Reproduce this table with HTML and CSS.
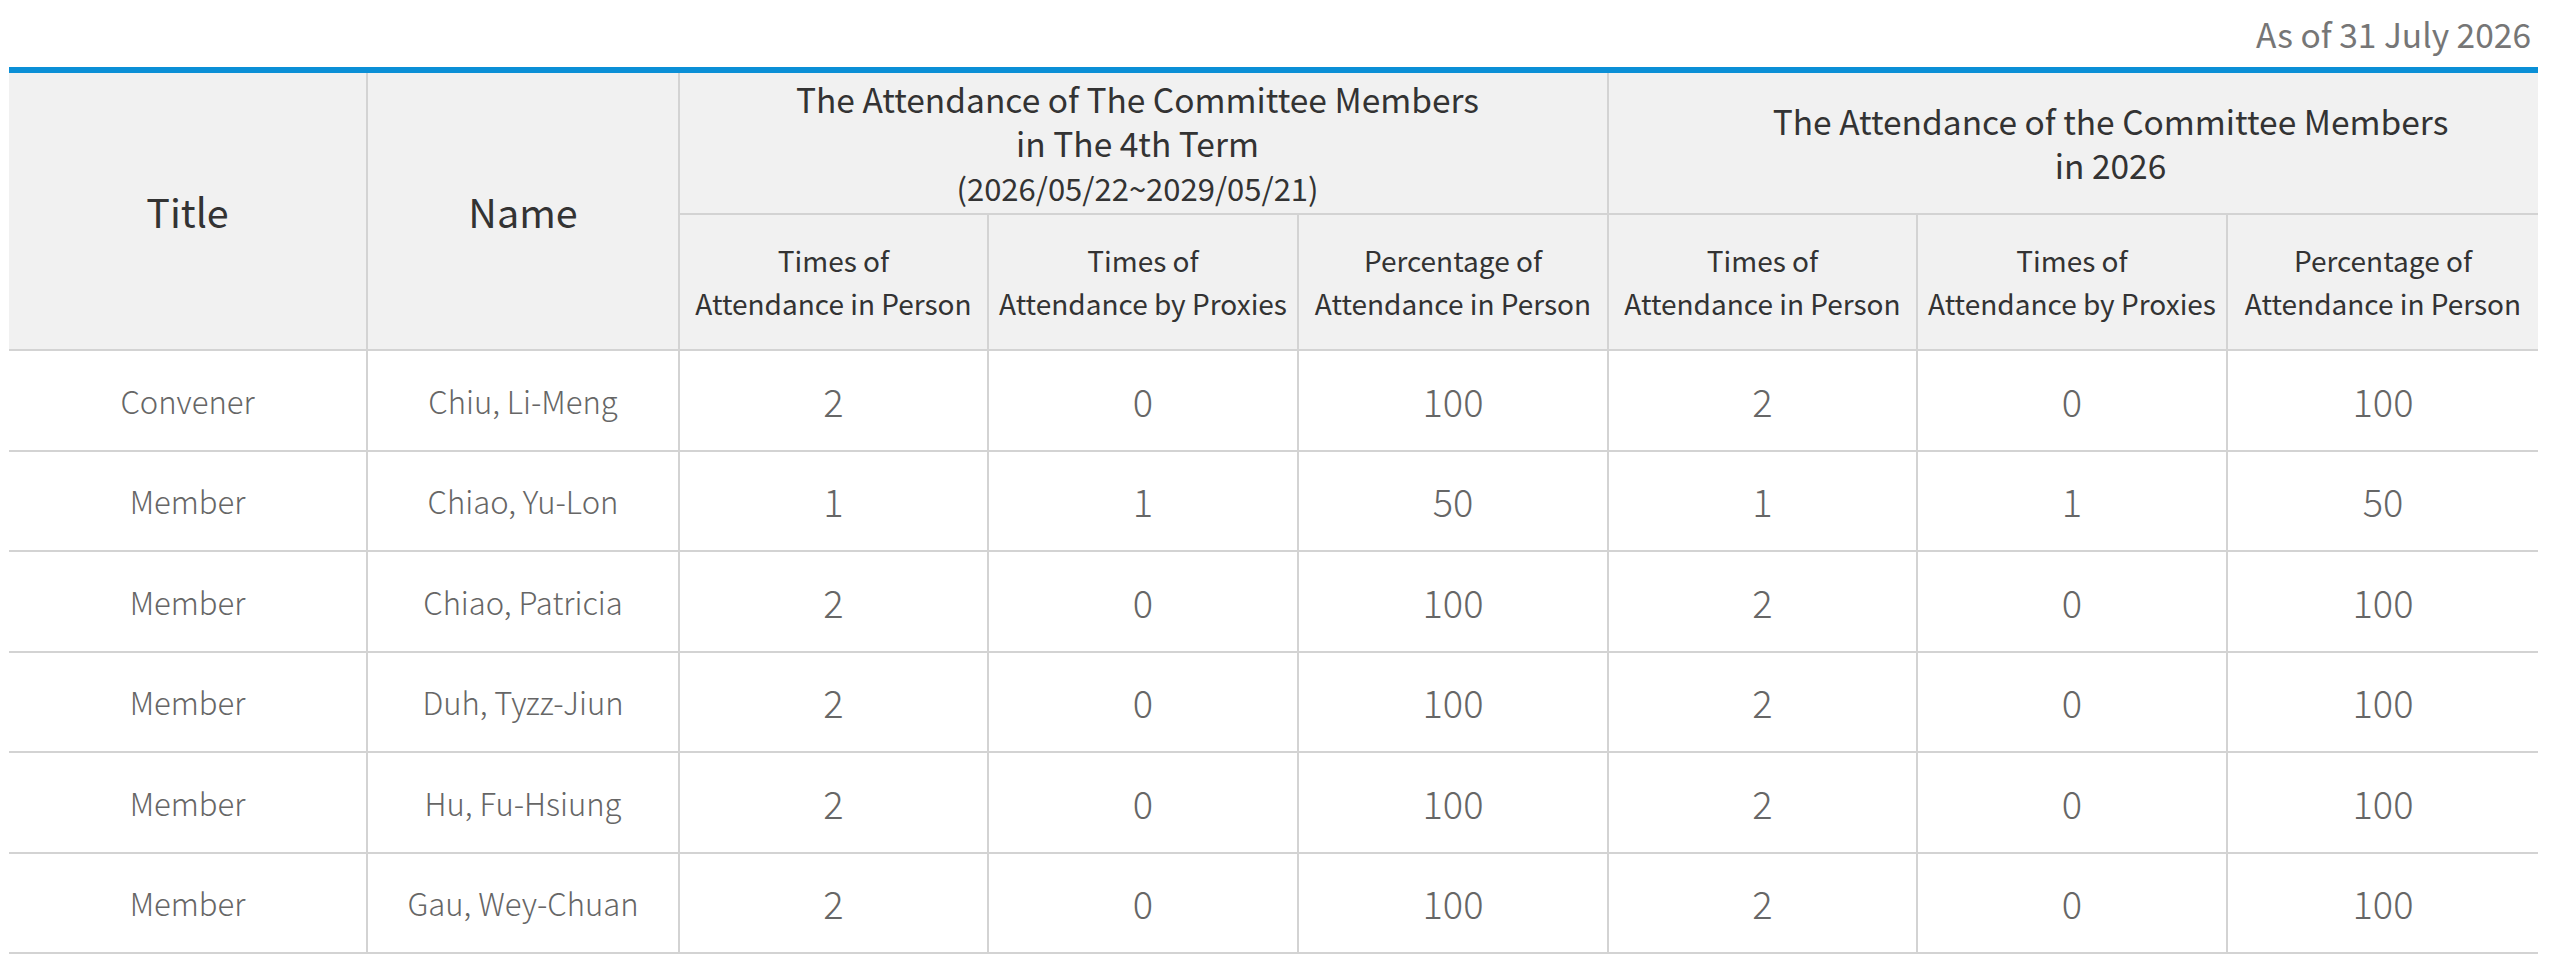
FILE: index.html
```html
<!DOCTYPE html>
<html lang="en">
<head>
<meta charset="utf-8">
<title>Attendance of the Committee Members</title>
<link rel="stylesheet" href="styles.css">
</head>
<body>
<div class="page">
  <p class="asof">As of 31 July 2026</p>
  <div class="table-wrap">
    <table class="att">
      <colgroup>
        <col class="c-title">
        <col class="c-name">
        <col class="c-a"><col class="c-b"><col class="c-c">
        <col class="c-d"><col class="c-e"><col class="c-f">
      </colgroup>
      <thead>
        <tr class="hrow1">
          <th rowspan="2" class="big">Title</th>
          <th rowspan="2" class="big">Name</th>
          <th colspan="3" class="group group-term">The Attendance of The Committee Members<br>in The 4th Term<br><span class="term">(2026/05/22~2029/05/21)</span></th>
          <th colspan="3" class="group group-year">The Attendance of the Committee Members<br>in 2026</th>
        </tr>
        <tr class="hrow2">
          <th class="sub">Times of<br>Attendance in Person</th>
          <th class="sub">Times of<br>Attendance by Proxies</th>
          <th class="sub">Percentage of<br>Attendance in Person</th>
          <th class="sub">Times of<br>Attendance in Person</th>
          <th class="sub">Times of<br>Attendance by Proxies</th>
          <th class="sub last">Percentage of<br>Attendance in Person</th>
        </tr>
      </thead>
      <tbody>
        <tr><td class="txt">Convener</td><td class="txt">Chiu, Li-Meng</td><td class="num">2</td><td class="num">0</td><td class="num">100</td><td class="num">2</td><td class="num">0</td><td class="num">100</td></tr>
        <tr><td class="txt">Member</td><td class="txt">Chiao, Yu-Lon</td><td class="num">1</td><td class="num">1</td><td class="num">50</td><td class="num">1</td><td class="num">1</td><td class="num">50</td></tr>
        <tr><td class="txt">Member</td><td class="txt">Chiao, Patricia</td><td class="num">2</td><td class="num">0</td><td class="num">100</td><td class="num">2</td><td class="num">0</td><td class="num">100</td></tr>
        <tr><td class="txt">Member</td><td class="txt">Duh, Tyzz-Jiun</td><td class="num">2</td><td class="num">0</td><td class="num">100</td><td class="num">2</td><td class="num">0</td><td class="num">100</td></tr>
        <tr><td class="txt">Member</td><td class="txt">Hu, Fu-Hsiung</td><td class="num">2</td><td class="num">0</td><td class="num">100</td><td class="num">2</td><td class="num">0</td><td class="num">100</td></tr>
        <tr><td class="txt">Member</td><td class="txt">Gau, Wey-Chuan</td><td class="num">2</td><td class="num">0</td><td class="num">100</td><td class="num">2</td><td class="num">0</td><td class="num">100</td></tr>
      </tbody>
    </table>
  </div>
</div>
</body>
</html>
```
FILE: styles.css
```css
html, body {
  margin: 0;
  padding: 0;
  background: #ffffff;
}

body {
  font-family: "Noto Sans CJK TC", "Noto Sans", "Liberation Sans", sans-serif;
}

.page {
  padding: 0 22px 0 9px;
}

.asof {
  margin: 0;
  padding: 10px 7px 9px 0;
  text-align: right;
  font-size: 33.5px;
  line-height: 48px;
  color: #767676;
}

.table-wrap {
  border-top: 6px solid #0a8fd6;
}

.att {
  width: 100%;
  border-collapse: collapse;
  table-layout: fixed;
}

.c-title { width: 358px; }
.c-name  { width: 312px; }
.c-a { width: 309px; }
.c-b { width: 310px; }
.c-c { width: 310px; }
.c-d { width: 309px; }
.c-e { width: 310px; }
.c-f { width: 311px; }

.att th,
.att td {
  padding: 0;
  text-align: center;
  vertical-align: middle;
  border: 2px solid #d3d3d3;
}

.att tr > :first-child { border-left: none; }
.att tr > :last-child { border-right: none; }
.att .hrow1 th { border-top: none; }
.att .hrow2 .last { border-right: none; }

.att th {
  background: #f1f1f1;
  color: #333333;
  font-weight: 400;
}

.hrow1 { height: 141px; }
.hrow2 { height: 136px; }

.att th.big {
  font-size: 39.5px;
  line-height: 50px;
}

.att th.group {
  font-size: 33.5px;
  line-height: 44px;
}

.att th.group-term {
  padding-right: 12px;
}

.att th.group-year {
  padding-left: 74px;
}

.att th.group .term {
  font-size: 31px;
}

.att th.sub {
  font-size: 28px;
  line-height: 43px;
}

.att tbody tr {
  height: 100.5px;
}

.att td {
  color: #666666;
  font-weight: 300;
  background: #ffffff;
}

.att td.txt {
  font-size: 31px;
}

.att td.num {
  font-size: 38px;
}
```
